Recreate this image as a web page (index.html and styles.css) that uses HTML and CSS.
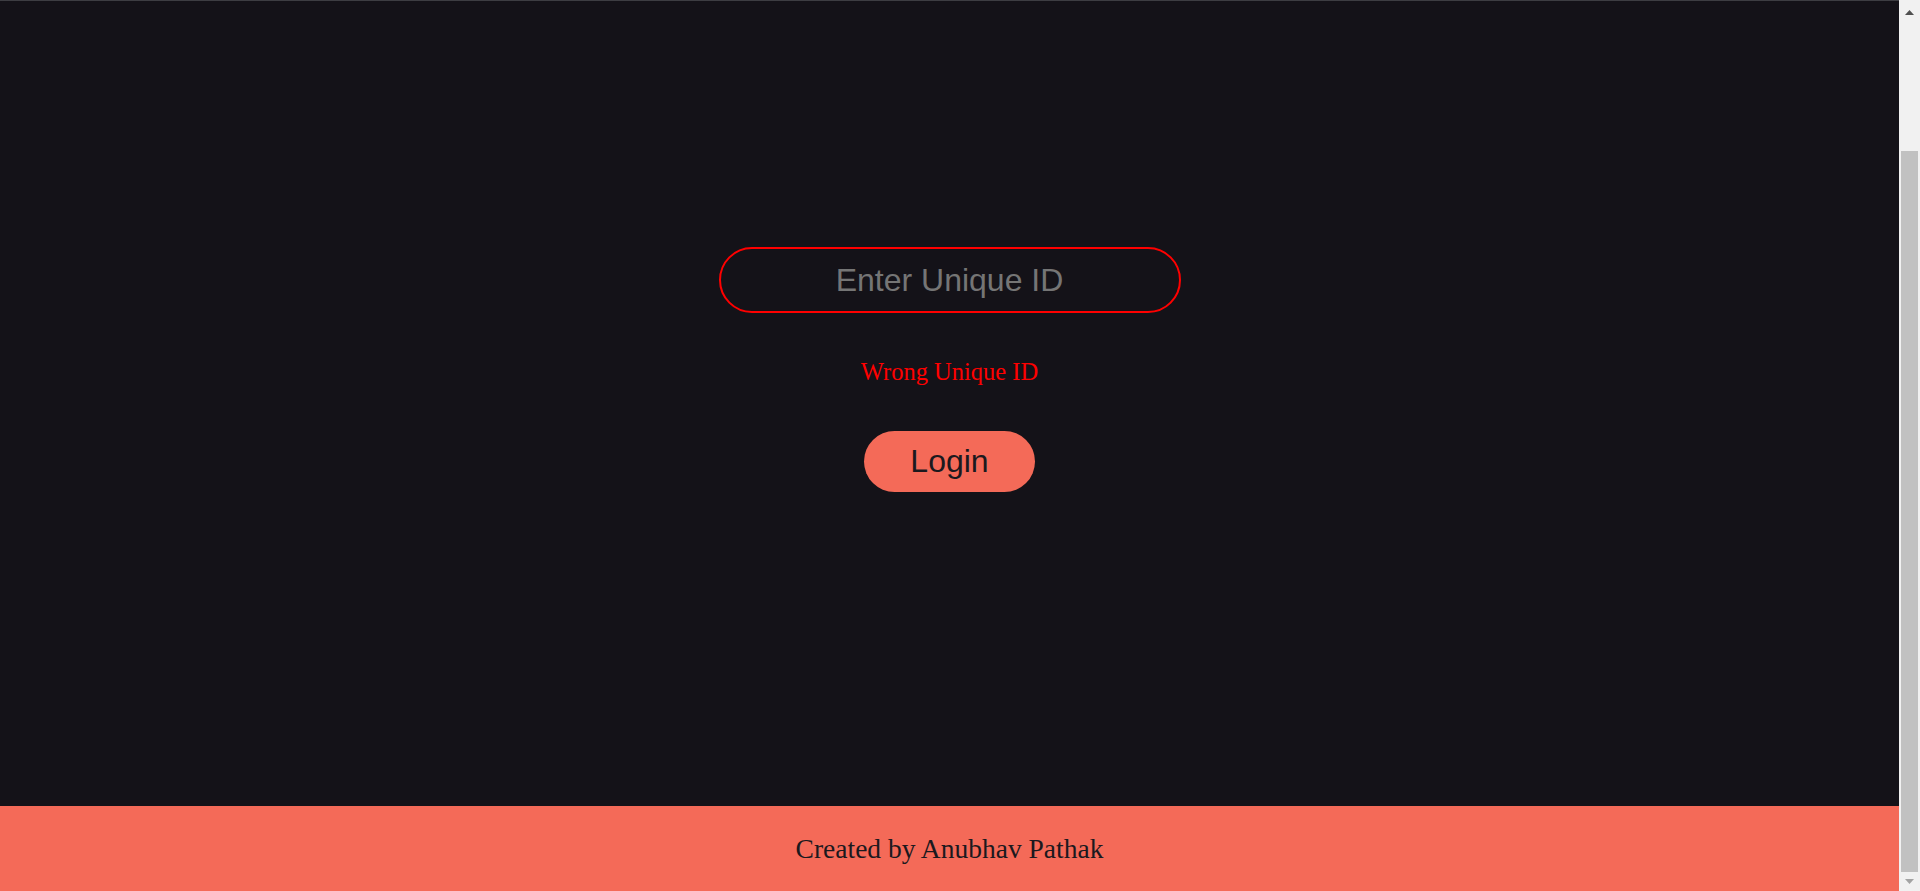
FILE: index.html
```html
<!DOCTYPE html>
<html lang="en">
<head>
<meta charset="utf-8">
<title>Login</title>
<link rel="stylesheet" href="styles.css">
</head>
<body>
<header class="topbar"></header>
<main class="login">
  <input class="uid-input" type="text" placeholder="Enter Unique ID">
  <p class="error">Wrong Unique ID</p>
  <button class="login-btn" type="button">Login</button>
</main>
<footer class="footer">Created by Anubhav Pathak</footer>
<div class="scrollbar" aria-hidden="true">
  <div class="sb-btn sb-up">
    <svg width="9" height="5" viewBox="0 0 9 5"><path d="M4.5 0L9 5H0z" fill="#505050"/></svg>
  </div>
  <div class="sb-track"><div class="sb-thumb"></div></div>
  <div class="sb-btn sb-down">
    <svg width="9" height="5" viewBox="0 0 9 5"><path d="M0 0H9L4.5 5z" fill="#a3a3a3"/></svg>
  </div>
</div>
<script src="script.js"></script>
</body>
</html>
```

FILE: styles.css
```css
html, body {
  margin: 0;
  padding: 0;
}
html {
  background: #141218;
}
body {
  margin-right: 21px;
  background: #141218;
  font-family: "Liberation Serif", "Times New Roman", serif;
}
.topbar {
  height: 167px;
  border-bottom: 1px solid #3d3d42;
  background: #141218;
}
.login {
  height: 805px;
  box-sizing: border-box;
  padding-top: 246px;
  display: flex;
  flex-direction: column;
  align-items: center;
}
.uid-input {
  box-sizing: border-box;
  width: 462px;
  height: 66px;
  margin: 0;
  padding: 0 20px;
  border: 2px solid #ff0000;
  border-radius: 40px;
  background: transparent;
  color: #e6e6e6;
  font-family: "Liberation Sans", Arial, sans-serif;
  font-size: 32px;
  text-align: center;
  outline: none;
}
.uid-input::placeholder {
  color: #757575;
}
.error {
  margin: 45px 0 0;
  color: #ff0000;
  font-size: 24.5px;
  line-height: 28px;
}
.login-btn {
  box-sizing: border-box;
  margin-top: 45px;
  width: 171px;
  height: 61px;
  padding: 0;
  border: none;
  border-radius: 31px;
  background: #f46a58;
  color: #1b191e;
  font-family: "Liberation Sans", Arial, sans-serif;
  font-size: 32px;
  cursor: pointer;
}
.footer {
  height: 85px;
  display: flex;
  align-items: center;
  justify-content: center;
  background: #f46a58;
  color: #1b191e;
  font-size: 27.5px;
}
.scrollbar {
  position: fixed;
  top: 0;
  right: 0;
  width: 21px;
  height: 100vh;
  display: flex;
  flex-direction: column;
  background: #f1f1f1;
}
.sb-btn {
  height: 17px;
  display: flex;
  justify-content: center;
}
.sb-btn svg {
  display: block;
}
.sb-up {
  align-items: flex-start;
  padding-top: 10px;
  box-sizing: border-box;
}
.sb-down {
  align-items: flex-start;
  padding-top: 5px;
  box-sizing: border-box;
}
.sb-track {
  flex: 1;
  padding: 134px 2px 0;
}
.sb-thumb {
  height: 721px;
  background: #c1c1c1;
}
```

FILE: script.js
```js
window.scrollTo(0, document.documentElement.scrollHeight);
window.addEventListener('load', function () {
  window.scrollTo(0, document.documentElement.scrollHeight);
});
```
